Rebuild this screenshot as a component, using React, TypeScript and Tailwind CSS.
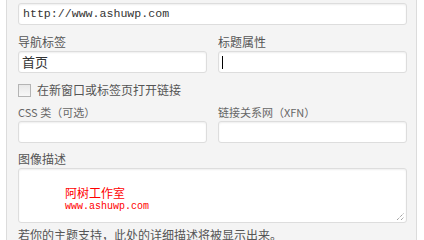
const cjk = "font-['Noto_Sans_CJK_SC',sans-serif]"

function Field({ className = "", children }: { className?: string; children?: React.ReactNode }) {
  return (
    <div
      className={`h-[22px] rounded-[3px] border border-[#dddddd] bg-white shadow-[inset_0_1px_2px_rgba(0,0,0,0.07)] ${className}`}
    >
      {children}
    </div>
  )
}

function Label({ children, small = false }: { children: React.ReactNode; small?: boolean }) {
  return (
    <div
      className={`h-[18px] ${cjk} ${
        small ? "text-[11px] text-[#666666]" : "text-[12px] text-[#555555]"
      } leading-[18px]`}
    >
      {children}
    </div>
  )
}

export default function App() {
  return (
    <div className="h-[240px] w-[424px] overflow-hidden bg-white pl-[6px]">
      <div className="h-full w-[411px] border-x border-[#dcdcdc] bg-[#f4f4f4] pl-[11px] pr-[9px] pt-[3px]">
        <Field className="flex items-center px-[4px]">
          <span className="font-['Liberation_Mono',monospace] text-[11.6px] text-[#333333]">
            http://www.ashuwp.com
          </span>
        </Field>

        <div className="mt-[8px] flex gap-[11px]">
          <div className="w-[189px]">
            <Label>导航标签</Label>
            <Field className="flex items-center px-[3px]">
              <span className={`${cjk} text-[13px] text-[#333333]`}>首页</span>
            </Field>
          </div>
          <div className="w-[189px]">
            <Label>标题属性</Label>
            <Field className="flex items-center border-[#9a9a9a] px-[3px] shadow-[0_0_2px_rgba(0,0,0,0.15)]">
              <span className="h-[13px] w-px bg-black" />
            </Field>
          </div>
        </div>

        <div className="mt-[7px] flex h-[20px] items-center gap-[6px]">
          <span className="h-[13px] w-[13px] border border-[#b4b4b4] bg-gradient-to-b from-[#e8e8e8] to-[#f8f8f8]" />
          <span className={`${cjk} text-[12px] text-[#555555]`}>在新窗口或标签页打开链接</span>
        </div>

        <div className="mt-[3px] flex gap-[11px]">
          <div className="w-[189px]">
            <Label small>CSS 类（可选）</Label>
            <Field />
          </div>
          <div className="w-[189px]">
            <Label small>链接关系网（XFN）</Label>
            <Field />
          </div>
        </div>

        <div className="mt-[7px]">
          <Label>图像描述</Label>
          <div className="relative h-[55px] rounded-[3px] border border-[#dddddd] bg-white pl-[46px] pt-[17px] shadow-[inset_0_1px_2px_rgba(0,0,0,0.07)]">
            <div className={`${cjk} text-[12px] leading-[14px] text-[#ff0000]`}>阿树工作室</div>
            <div className="mt-[2px] font-['Liberation_Mono',monospace] text-[10px] leading-[10px] text-[#ff0000]">
              www.ashuwp.com
            </div>
            <svg className="absolute bottom-[2px] right-[2px]" width="8" height="8" viewBox="0 0 8 8">
              <path d="M1 8 L8 1 M5 8 L8 5" stroke="#777777" strokeWidth="1" strokeDasharray="1 1" />
            </svg>
          </div>
        </div>

        <div className={`mt-[3px] ${cjk} whitespace-nowrap text-[12px] leading-[18px] text-[#555555]`}>
          若你的主题支持，此处的详细描述将被显示出来。
        </div>
      </div>
    </div>
  )
}
